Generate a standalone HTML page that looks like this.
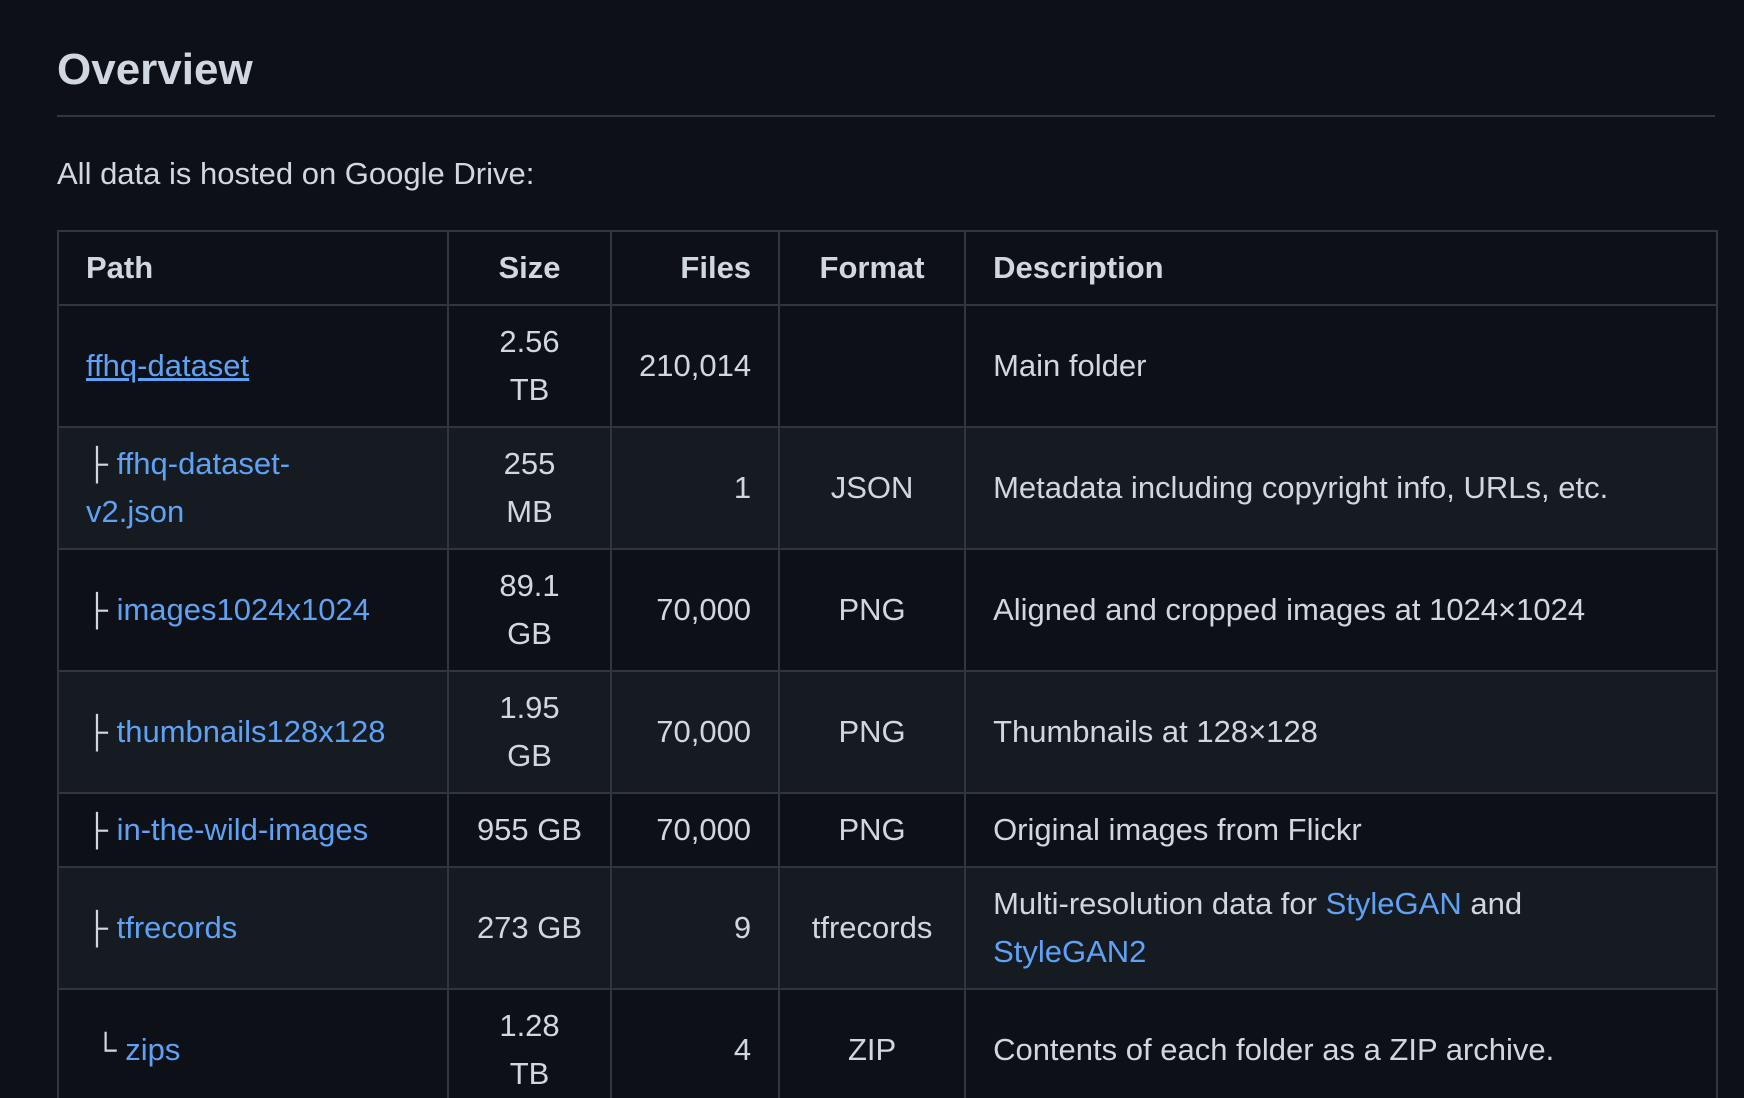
<!DOCTYPE html>
<html><head><meta charset="utf-8"><style>
html,body{margin:0;padding:0;background:#0d1117;width:1744px;height:1098px;overflow:hidden}
body{font-family:"Liberation Sans",sans-serif;color:#d1d7e0;position:relative}
h2{position:absolute;left:57px;top:40px;margin:0;font-size:44px;font-weight:bold;color:#d1d7e0;line-height:60px}
.rule{position:absolute;left:57px;top:115px;width:1658px;height:2px;background:#30363d}
p{position:absolute;left:57px;top:154px;margin:0;font-size:31px;line-height:40px}
table{position:absolute;left:57px;top:230px;border-collapse:collapse;table-layout:fixed;font-size:31px;line-height:48px}
td,th{border:2px solid #30363d;padding:12px 27px;vertical-align:middle}
th{font-weight:bold;height:48px}
tr.a{background:#0d1117}tr.b{background:#161b22}
a{color:#5ea2f5;text-decoration:none}
a.u{text-decoration:underline}
.c{text-align:center}.r{text-align:right}
.t{color:#d1d7e0}
</style></head><body>
<h2>Overview</h2>
<div class="rule"></div>
<p>All data is hosted on Google Drive:</p>
<table>
<colgroup><col style="width:390px"><col style="width:163px"><col style="width:167px"><col style="width:186px"><col style="width:752px"></colgroup>
<tr class="a"><th style="text-align:left">Path</th><th class="c">Size</th><th class="r">Files</th><th class="c">Format</th><th style="text-align:left">Description</th></tr>
<tr class="a"><td><a class="u">ffhq-dataset</a></td><td class="c">2.56<br>TB</td><td class="r">210,014</td><td class="c"></td><td>Main folder</td></tr>
<tr class="b"><td><span class="t">├</span> <a>ffhq-dataset-<br>v2.json</a></td><td class="c">255<br>MB</td><td class="r">1</td><td class="c">JSON</td><td>Metadata including copyright info, URLs, etc.</td></tr>
<tr class="a"><td><span class="t">├</span> <a>images1024x1024</a></td><td class="c">89.1<br>GB</td><td class="r">70,000</td><td class="c">PNG</td><td>Aligned and cropped images at 1024×1024</td></tr>
<tr class="b"><td><span class="t">├</span> <a>thumbnails128x128</a></td><td class="c">1.95<br>GB</td><td class="r">70,000</td><td class="c">PNG</td><td>Thumbnails at 128×128</td></tr>
<tr class="a"><td><span class="t">├</span> <a>in-the-wild-images</a></td><td class="c">955 GB</td><td class="r">70,000</td><td class="c">PNG</td><td>Original images from Flickr</td></tr>
<tr class="b"><td><span class="t">├</span> <a>tfrecords</a></td><td class="c">273 GB</td><td class="r">9</td><td class="c">tfrecords</td><td>Multi-resolution data for <a>StyleGAN</a> and<br><a>StyleGAN2</a></td></tr>
<tr class="a"><td>&nbsp;<span class="t">└</span> <a>zips</a></td><td class="c">1.28 TB</td><td class="r">4</td><td class="c">ZIP</td><td>Contents of each folder as a ZIP archive.</td></tr>
</table>
</body></html>
